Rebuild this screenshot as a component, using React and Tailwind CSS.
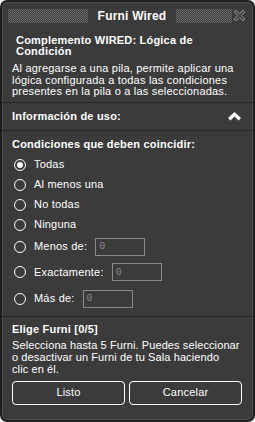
import React from "react";

const font = { fontFamily: '"Liberation Sans", Arial, sans-serif' };

const Radio = ({ checked }) => (
  <span className="w-[12px] h-[12px] rounded-full border-[1.5px] border-white flex items-center justify-center shrink-0">
    {checked && <span className="w-[6px] h-[6px] rounded-full bg-white" />}
  </span>
);

const NumInput = () => (
  <div className="w-[50px] h-[18px] border border-[#8a8a8a] flex items-center pl-[3px] text-[10px] text-[#8a8a8a] font-['Liberation_Mono',monospace]">
    0
  </div>
);

const Dots = ({ className }) => (
  <div
    className={`h-[14px] bg-[conic-gradient(#6e6e6e_25%,transparent_0_50%,#6e6e6e_0_75%,transparent_0)] bg-[length:2px_2px] ${className}`}
  />
);

export default function App() {
  const options = [
    { label: "Todas", checked: true },
    { label: "Al menos una" },
    { label: "No todas" },
    { label: "Ninguna" },
  ];

  return (
    <div
      className="w-[255px] h-[422px] bg-[#3b3b3b] border-2 border-[#1f1f1f] rounded-[7px] shadow-[inset_0_0_0_1px_#4e4e4e] text-white flex flex-col overflow-hidden"
      style={font}
    >
      {/* title bar */}
      <div className="h-[27px] flex items-center px-[6px] gap-[6px]">
        <Dots className="w-[80px]" />
        <div className="flex-1 text-center font-bold text-[12px] tracking-[0.2px]">Furni Wired</div>
        <Dots className="w-[56px]" />
        <svg width="15" height="15" viewBox="0 0 15 15" className="-ml-[6px]">
          <path
            d="M2 4 L4 2 L7.5 5.5 L11 2 L13 4 L9.5 7.5 L13 11 L11 13 L7.5 9.5 L4 13 L2 11 L5.5 7.5 Z"
            fill="#4a4a4a"
            stroke="#8a8a8a"
            strokeWidth="1"
          />
        </svg>
      </div>

      {/* description */}
      <div className="px-[10px] pt-[6px]">
        <div className="pl-[4px] font-bold text-[11px] leading-[11px] tracking-[0.2px]">
          Complemento WIRED: Lógica de Condición
        </div>
        <p className="mt-[6px] text-[11px] leading-[11.5px] tracking-[0.2px]">
          Al agregarse a una pila, permite aplicar una lógica configurada a todas las condiciones presentes en la pila o a las seleccionadas.
        </p>
      </div>

      <div className="mt-[4px] h-px bg-[#272727]" />
      <div className="h-[27px] flex items-center justify-between px-[10px]">
        <span className="font-bold text-[11px] tracking-[0.2px]">Información de uso:</span>
        <svg width="13" height="9" viewBox="0 0 13 9" className="mr-[2px]">
          <path d="M6.5 0 L13 6 L10.5 8.5 L6.5 4.5 L2.5 8.5 L0 6 Z" fill="#fff" />
        </svg>
      </div>
      <div className="h-px bg-[#272727]" />

      {/* conditions */}
      <div className="px-[10px] pt-[7px] text-[11px] tracking-[0.2px]">
        <div className="font-bold leading-[13px]">Condiciones que deben coincidir:</div>
        <div className="mt-[4px] flex flex-col">
          {options.map((o) => (
            <div key={o.label} className="h-[20px] flex items-center gap-[8px] pl-[2px]">
              <Radio checked={o.checked} />
              <span>{o.label}</span>
            </div>
          ))}
          <div className="h-[24px] flex items-center gap-[8px] pl-[2px]">
            <Radio />
            <span>Menos de:</span>
            <NumInput />
          </div>
          <div className="h-[27px] flex items-center gap-[8px] pl-[2px]">
            <Radio />
            <span>Exactamente:</span>
            <NumInput />
          </div>
          <div className="h-[26px] flex items-center gap-[8px] pl-[2px]">
            <Radio />
            <span>Más de:</span>
            <NumInput />
          </div>
        </div>
      </div>

      <div className="mt-[4px] h-px bg-[#272727]" />

      {/* furni pick */}
      <div className="px-[10px] pt-[6px] text-[11px] tracking-[0.2px]">
        <div className="font-bold leading-[12px]">Elige Furni [0/5]</div>
        <p className="mt-[4px] leading-[12px] tracking-[0.1px] whitespace-nowrap">
          Selecciona hasta 5 Furni. Puedes seleccionar
          <br />
          o desactivar un Furni de tu Sala haciendo
          <br />
          clic en él.
        </p>
        <div className="mt-[6px] grid grid-cols-2 gap-[4px] pr-[1px]">
          <button className="h-[24px] rounded-[4px] border border-white">Listo</button>
          <button className="h-[24px] rounded-[4px] border border-white">Cancelar</button>
        </div>
      </div>
    </div>
  );
}
